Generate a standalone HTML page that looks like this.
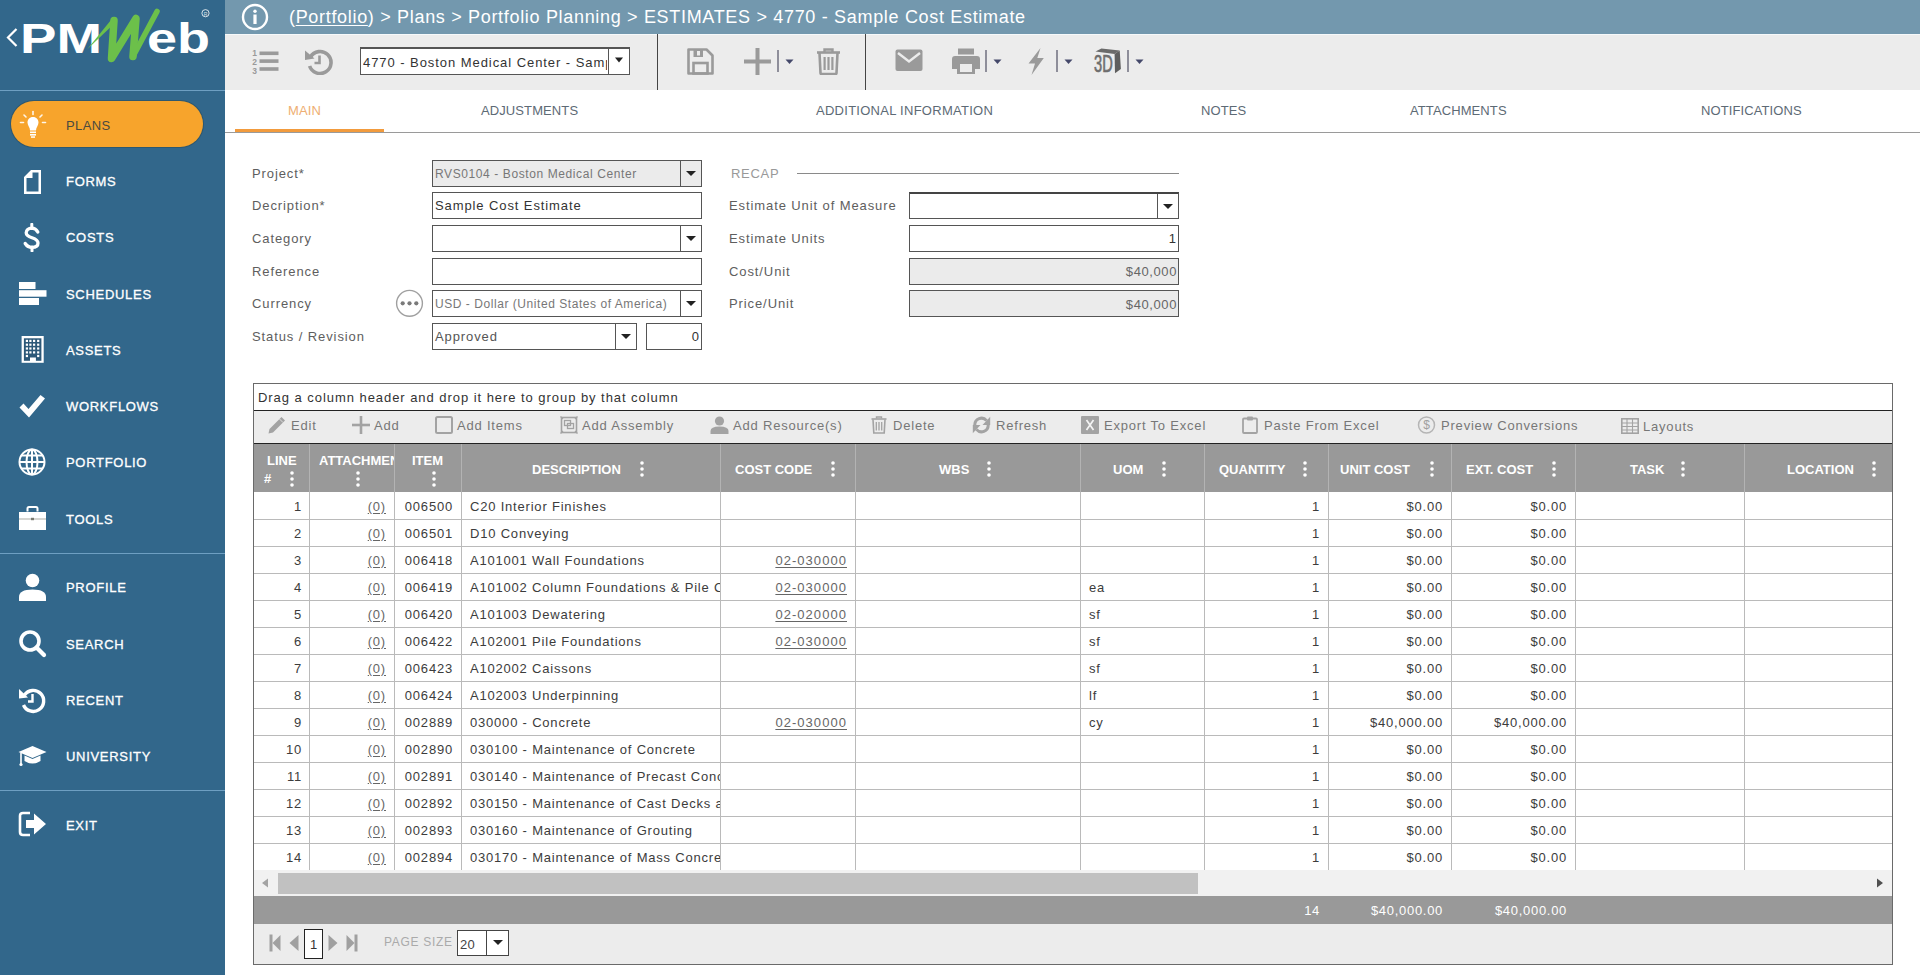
<!DOCTYPE html>
<html><head><meta charset="utf-8">
<style>
*{box-sizing:border-box;margin:0;padding:0}
html,body{width:1920px;height:975px;overflow:hidden;background:#fff;font-family:"Liberation Sans",sans-serif}
.a{position:absolute}
#side{left:0;top:0;width:225px;height:975px;background:#32678b}
.sl{left:0;width:225px;height:1px;background:#6e9fc2}
.ni{left:66px;font-size:13px;font-weight:400;-webkit-text-stroke:0.3px currentColor;color:#fff;letter-spacing:0.7px;line-height:15px;white-space:nowrap}
.ic{left:18px;width:30px;height:30px}
#top{left:225px;top:0;width:1695px;height:34px;background:#7398ae}
#tb{left:225px;top:34px;width:1695px;height:56px;background:#ececec}
.tab{top:103px;font-size:13px;color:#5d6a75;letter-spacing:0.1px;line-height:15px;white-space:nowrap}
.lbl{font-size:13px;color:#5e5e5e;letter-spacing:0.9px;line-height:15px;white-space:nowrap}
.inp{background:#fff;border:1px solid #555;height:27px}
.dd i{position:absolute;top:0;width:1px;height:25px;background:#555}
.dd b{position:absolute;top:10px;width:0;height:0;border-left:5px solid transparent;border-right:5px solid transparent;border-top:5px solid #222}
.gt{font-size:13px;color:#333;letter-spacing:0.95px;line-height:15px;white-space:nowrap}
.gh{font-size:13px;font-weight:700;color:#fff;line-height:15px;white-space:nowrap}
.gc{font-size:13px;color:#3c3c3c;letter-spacing:0.8px;line-height:15px;white-space:nowrap}
.r{text-align:right}
.lk{color:#666}
.lk u{text-underline-offset:2px}
.gf{font-size:13px;color:#fff;letter-spacing:0.7px;line-height:15px;white-space:nowrap}
.gb{font-size:13px;color:#777;letter-spacing:0.8px;line-height:15px;white-space:nowrap}
.txt{font-size:13px;letter-spacing:0.9px;color:#333;line-height:15px;white-space:nowrap}
</style></head><body>
<div id="side" class="a">
 <!-- logo -->
 <svg class="a" style="left:0;top:0" width="225" height="90" viewBox="0 0 225 90">
  <path d="M16.5 29 L8 37.5 L16.5 46" fill="none" stroke="#fff" stroke-width="2.2"/>
  <text x="20" y="52.7" font-family="Liberation Sans" font-weight="700" font-size="42" fill="#fff" textLength="82" lengthAdjust="spacingAndGlyphs">PM</text>
  <text x="147" y="52.7" font-family="Liberation Sans" font-weight="700" font-size="42" fill="#fff" textLength="63" lengthAdjust="spacingAndGlyphs">eb</text>
  <path d="M87 49.5 L111 20 L116.5 21.5 Z" fill="#6cc04a"/>
  <path d="M114 20.5 L111.5 58.5 L136 18.5 L133 56.5" fill="none" stroke="#6cc04a" stroke-width="7.5" stroke-linecap="round" stroke-linejoin="round"/>
  <path d="M133 56.5 L157 11.5" fill="none" stroke="#6cc04a" stroke-width="5.5" stroke-linecap="round"/>
  <circle cx="205.5" cy="13.2" r="3.6" fill="none" stroke="#fff" stroke-width="1" opacity="0.8"/>
  <text x="205.5" y="15.5" font-family="Liberation Sans" font-size="5" fill="#fff" text-anchor="middle" opacity="0.8">R</text>
 </svg>
 <div class="a sl" style="top:90px"></div>
 <!-- plans pill -->
 <div class="a" style="left:11px;top:101px;width:192px;height:46px;border-radius:23px;background:#f7a42c;box-shadow:0 0 0 1px rgba(40,60,60,0.35)"></div>
 <svg class="a" style="left:19px;top:110px" width="28" height="29" viewBox="0 0 28 29">
  <g stroke="#fff" stroke-width="1.6" stroke-linecap="round" opacity="0.9">
   <line x1="14" y1="1.5" x2="14" y2="4.5"/><line x1="5" y1="5" x2="7" y2="7"/><line x1="23" y1="5" x2="21" y2="7"/>
   <line x1="1.5" y1="12.5" x2="4.5" y2="12.5"/><line x1="23.5" y1="12.5" x2="26.5" y2="12.5"/>
  </g>
  <path d="M14 7 C10.5 7 8.5 9.6 8.5 12.6 C8.5 15.6 11 17.5 11 20.5 L17 20.5 C17 17.5 19.5 15.6 19.5 12.6 C19.5 9.6 17.5 7 14 7Z" fill="#fff"/>
  <rect x="11" y="21.5" width="6" height="1.6" fill="#fff"/><rect x="11" y="24" width="6" height="1.6" fill="#fff"/><rect x="12" y="26.3" width="4" height="1.5" fill="#fff"/>
 </svg>
 <div class="a ni" style="top:118px;color:#4a4a40;-webkit-text-stroke:0;letter-spacing:0.4px">PLANS</div>
 <!-- forms -->
 <svg class="a" style="left:22px;top:168px" width="21" height="28" viewBox="0 0 21 28">
  <path d="M2 9 L9 2 L19 2 L19 26 L2 26 Z M4.5 10 L4.5 23.5 L16.5 23.5 L16.5 4.5 L10.5 4.5 L10.5 10 Z" fill="#fff" fill-rule="evenodd"/>
 </svg>
 <div class="a ni" style="top:174px">FORMS</div>
 <!-- costs -->
 <svg class="a" style="left:20px;top:223px" width="24" height="29" viewBox="0 0 24 29">
  <path d="M17.8 9 C16.5 6.5 14.5 5.2 11.8 5.2 C8.3 5.2 6.2 7.2 6.2 9.8 C6.2 12.8 9 13.8 12 14.8 C15 15.8 18 16.8 18 20 C18 22.6 15.8 24.4 12 24.4 C9 24.4 6.8 23 5.2 20.5" fill="none" stroke="#fff" stroke-width="3.3" stroke-linecap="round"/>
  <path d="M11.8 1.2 V5.5 M12 24 V28" stroke="#fff" stroke-width="3" stroke-linecap="round"/>
 </svg>
 <div class="a ni" style="top:230px">COSTS</div>
 <!-- schedules -->
 <svg class="a" style="left:18px;top:281px" width="30" height="25" viewBox="0 0 30 25">
  <rect x="1" y="1" width="16.5" height="7" fill="#fff"/><rect x="1" y="9.2" width="27.5" height="6.5" fill="#fff"/><rect x="1" y="17" width="20" height="7" fill="#fff"/>
 </svg>
 <div class="a ni" style="top:287px">SCHEDULES</div>
 <!-- assets -->
 <svg class="a" style="left:21px;top:335px" width="24" height="29" viewBox="0 0 24 29">
  <rect x="0.6" y="1" width="22.1" height="26.8" fill="#fff"/>
  <rect x="2.9" y="3.3" width="17.5" height="22.5" fill="#2c5878"/>
  <rect x="4.8" y="4.8" width="2.2" height="2.2" fill="#fff"/><rect x="4.8" y="8.6" width="2.2" height="2.2" fill="#fff"/><rect x="4.8" y="12.4" width="2.2" height="2.2" fill="#fff"/><rect x="4.8" y="16.3" width="2.2" height="2.2" fill="#fff"/><rect x="8.3" y="4.8" width="2.2" height="2.2" fill="#fff"/><rect x="8.3" y="8.6" width="2.2" height="2.2" fill="#fff"/><rect x="8.3" y="12.4" width="2.2" height="2.2" fill="#fff"/><rect x="8.3" y="16.3" width="2.2" height="2.2" fill="#fff"/><rect x="12.0" y="4.8" width="2.2" height="2.2" fill="#fff"/><rect x="12.0" y="8.6" width="2.2" height="2.2" fill="#fff"/><rect x="12.0" y="12.4" width="2.2" height="2.2" fill="#fff"/><rect x="12.0" y="16.3" width="2.2" height="2.2" fill="#fff"/><rect x="16.1" y="4.8" width="2.2" height="2.2" fill="#fff"/><rect x="16.1" y="8.6" width="2.2" height="2.2" fill="#fff"/><rect x="16.1" y="12.4" width="2.2" height="2.2" fill="#fff"/><rect x="16.1" y="16.3" width="2.2" height="2.2" fill="#fff"/><rect x="4.8" y="19.9" width="2.2" height="2.2" fill="#fff"/><rect x="16.1" y="19.9" width="2.2" height="2.2" fill="#fff"/>
  <rect x="9" y="22.5" width="5.9" height="4" fill="#fff"/>
 </svg>
 <div class="a ni" style="top:343px">ASSETS</div>
 <!-- workflows -->
 <svg class="a" style="left:18px;top:393px" width="28" height="26" viewBox="0 0 28 26">
  <path d="M1.5 14.5 L5.5 10.5 L10.5 16 L22.5 2 L27 5.5 L11 24.5 Z" fill="#fff"/>
 </svg>
 <div class="a ni" style="top:399px">WORKFLOWS</div>
 <!-- portfolio -->
 <svg class="a" style="left:18px;top:448px" width="28" height="28" viewBox="0 0 28 28">
  <g fill="none" stroke="#fff" stroke-width="2">
   <circle cx="14" cy="14" r="12.5"/>
   <ellipse cx="14" cy="14" rx="5.5" ry="12.5"/>
   <line x1="14" y1="1.5" x2="14" y2="26.5"/>
   <line x1="1.5" y1="14" x2="26.5" y2="14"/>
   <path d="M3.5 7.5 H24.5 M3.5 20.5 H24.5"/>
  </g>
 </svg>
 <div class="a ni" style="top:455px">PORTFOLIO</div>
 <!-- tools -->
 <svg class="a" style="left:18px;top:506px" width="29" height="25" viewBox="0 0 29 25">
  <path d="M9.5 5.5 V2.5 Q9.5 1 11 1 H18 Q19.5 1 19.5 2.5 V5.5" fill="none" stroke="#fff" stroke-width="2"/>
  <rect x="1" y="6" width="27" height="18" fill="#fff"/>
  <rect x="1" y="12.6" width="27" height="0.8" fill="#9a9a90"/><rect x="13" y="11.8" width="3" height="2.4" fill="#7a7a70"/>
 </svg>
 <div class="a ni" style="top:512px">TOOLS</div>
 <div class="a sl" style="top:553px"></div>
 <!-- profile -->
 <svg class="a" style="left:18px;top:573px" width="29" height="29" viewBox="0 0 29 29">
  <circle cx="14.5" cy="7.5" r="6.8" fill="#fff"/>
  <path d="M1 28 V24 Q1 16.5 14.5 16.5 Q28 16.5 28 24 V28 Z" fill="#fff"/>
 </svg>
 <div class="a ni" style="top:580px">PROFILE</div>
 <!-- search -->
 <svg class="a" style="left:18px;top:629px" width="29" height="29" viewBox="0 0 29 29">
  <circle cx="12" cy="12" r="9" fill="none" stroke="#fff" stroke-width="3.6"/>
  <line x1="18.5" y1="18.5" x2="26" y2="26" stroke="#fff" stroke-width="4.2" stroke-linecap="round"/>
 </svg>
 <div class="a ni" style="top:637px">SEARCH</div>
 <!-- recent -->
 <svg class="a" style="left:18px;top:686px" width="29" height="29" viewBox="0 0 29 29">
  <path d="M6.5 9 A10.5 10.5 0 1 1 5.5 19" fill="none" stroke="#fff" stroke-width="3.4"/>
  <path d="M1 3 L10 11.5 L1 12.5 Z" fill="#fff"/>
  <path d="M14.5 8 V15.5 H10" fill="none" stroke="#fff" stroke-width="2.4"/>
 </svg>
 <div class="a ni" style="top:693px">RECENT</div>
 <!-- university -->
 <svg class="a" style="left:18px;top:745px" width="29" height="22" viewBox="0 0 29 22">
  <path d="M14.5 1 L28.5 7 L14.5 13 L0.5 7 Z" fill="#fff"/>
  <path d="M6.5 10.5 V16 Q14.5 21 22.5 16 V10.5 L14.5 14 Z" fill="#fff"/>
  <line x1="3" y1="8" x2="3" y2="19" stroke="#fff" stroke-width="1.6"/>
  <circle cx="3" cy="19.5" r="1.6" fill="#fff"/>
 </svg>
 <div class="a ni" style="top:749px">UNIVERSITY</div>
 <div class="a sl" style="top:790px"></div>
 <!-- exit -->
 <svg class="a" style="left:18px;top:810px" width="30" height="28" viewBox="0 0 30 28">
  <path d="M12 3 H5 Q2 3 2 6 V22 Q2 25 5 25 H12" fill="none" stroke="#fff" stroke-width="2.6"/>
  <path d="M8 10 H16 V3.5 L28 14 L16 24.5 V18 H8 Z" fill="#fff"/>
 </svg>
 <div class="a ni" style="top:818px">EXIT</div>
</div>

<div id="top" class="a">
 <svg class="a" style="left:16px;top:3px" width="28" height="28" viewBox="0 0 28 28">
  <circle cx="14" cy="14" r="12" fill="none" stroke="#fff" stroke-width="2.4"/>
  <circle cx="14" cy="8.3" r="1.7" fill="#fff"/>
  <rect x="12.4" y="11.5" width="3.2" height="9.5" fill="#fff"/>
 </svg>
 <div class="a" style="left:64px;top:7px;font-size:18px;line-height:20px;color:#fff;letter-spacing:0.68px;white-space:nowrap">(<span style="text-decoration:underline;text-underline-offset:2px">Portfolio</span>) &gt; Plans &gt; Portfolio Planning &gt; ESTIMATES &gt; 4770 - Sample Cost Estimate</div>
</div>
<div id="tb" class="a">
 <div class="a" style="left:0;top:0;width:1695px;height:1px;background:#f6f9fa"></div>
 <!-- list icon -->
 <svg class="a" style="left:26px;top:14px" width="28" height="27" viewBox="0 0 28 27">
  <g fill="#9a9a9a">
   <text x="3.5" y="8" font-family="Liberation Sans" font-weight="700" font-size="8.5" text-anchor="middle">1</text>
   <text x="3.5" y="17" font-family="Liberation Sans" font-weight="700" font-size="8.5" text-anchor="middle">2</text>
   <text x="3.5" y="26" font-family="Liberation Sans" font-weight="700" font-size="8.5" text-anchor="middle">3</text>
   <rect x="8.5" y="3.5" width="19" height="3.6"/><rect x="8.5" y="11.3" width="19" height="3.6"/><rect x="8.5" y="19.2" width="19" height="3.6"/>
  </g>
 </svg>
 <!-- history icon -->
 <svg class="a" style="left:80px;top:14px" width="28" height="27" viewBox="0 0 28 27">
  <path d="M5.5 9 A11 11 0 1 1 4.6 18" fill="none" stroke="#9a9a9a" stroke-width="3.6"/>
  <path d="M0 2.5 L9.5 10.5 L0 12 Z" fill="#9a9a9a"/>
  <path d="M14.5 7.5 V15 H9.5" fill="none" stroke="#9a9a9a" stroke-width="2.6"/>
 </svg>
 <!-- record dropdown -->
 <div class="a" style="left:135px;top:13px;width:270px;height:28px;background:#fff;border:1px solid #555;border-top:2px solid #555"></div>
 <div class="a" style="left:383px;top:15px;width:1px;height:25px;background:#555"></div>
 <svg class="a" style="left:389px;top:23px" width="10" height="6" viewBox="0 0 10 6"><path d="M1 0.5 H9 L5 5.5 Z" fill="#222"/></svg>
 <div class="a txt" style="left:138px;top:21px;color:#333;letter-spacing:0.94px;width:244px;overflow:hidden">4770 - Boston Medical Center - Sample Cost Estimate</div>
 <div class="a" style="left:432px;top:0;width:1px;height:56px;background:#444"></div>
 <!-- save -->
 <svg class="a" style="left:462px;top:14px" width="27" height="27" viewBox="0 0 27 27">
  <path d="M1.5 1.5 H19.5 L25.5 7.5 V25.5 H1.5 Z" fill="none" stroke="#9a9a9a" stroke-width="2.6" stroke-linejoin="round"/>
  <rect x="6.5" y="1.5" width="9.5" height="7.5" fill="#9a9a9a"/>
  <rect x="10" y="3" width="3" height="4.5" fill="#ececec"/>
  <rect x="6.5" y="15" width="14" height="10.5" fill="none" stroke="#9a9a9a" stroke-width="2.6"/>
 </svg>
 <!-- plus -->
 <svg class="a" style="left:519px;top:14px" width="27" height="27" viewBox="0 0 27 27">
  <rect x="0" y="11.5" width="27" height="4" fill="#9a9a9a"/><rect x="11.5" y="0" width="4" height="27" fill="#9a9a9a"/>
 </svg>
 <div class="a" style="left:552px;top:16px;width:2px;height:22px;background:#8e8e9a"></div>
 <svg class="a" style="left:560px;top:25px" width="9" height="6" viewBox="0 0 9 6"><path d="M0.5 0.5 H8.5 L4.5 5 Z" fill="#44486a"/></svg>
 <!-- trash -->
 <svg class="a" style="left:591px;top:14px" width="25" height="27" viewBox="0 0 25 27">
  <path d="M1 4.5 H24" stroke="#9a9a9a" stroke-width="2.6"/>
  <path d="M8.5 4 V1.5 H16.5 V4" fill="none" stroke="#9a9a9a" stroke-width="2.4"/>
  <path d="M3.5 5 L4.5 25 Q4.5 26 5.5 26 H19.5 Q20.5 26 20.5 25 L21.5 5" fill="none" stroke="#9a9a9a" stroke-width="2.6"/>
  <rect x="7.5" y="9" width="2.2" height="13" fill="#9a9a9a"/><rect x="11.4" y="9" width="2.2" height="13" fill="#9a9a9a"/><rect x="15.3" y="9" width="2.2" height="13" fill="#9a9a9a"/>
 </svg>
 <div class="a" style="left:640px;top:0;width:1px;height:56px;background:#444"></div>
 <!-- mail -->
 <svg class="a" style="left:670px;top:15px" width="28" height="23" viewBox="0 0 28 23">
  <rect x="0.5" y="0.5" width="27" height="21.5" rx="2" fill="#9a9a9a"/>
  <path d="M3 4 L14 12.5 L25 4" fill="none" stroke="#ececec" stroke-width="2.4"/>
 </svg>
 <!-- print -->
 <svg class="a" style="left:727px;top:14px" width="28" height="27" viewBox="0 0 28 27">
  <rect x="6" y="0.5" width="16" height="6" fill="#9a9a9a"/>
  <path d="M0 11 Q0 8 3 8 H25 Q28 8 28 11 V21 H23 V26 H5 V21 H0 Z" fill="#9a9a9a"/>
  <rect x="8" y="16" width="12" height="8" fill="#ececec"/>
 </svg>
 <div class="a" style="left:760px;top:16px;width:2px;height:22px;background:#8e8e9a"></div>
 <svg class="a" style="left:768px;top:25px" width="9" height="6" viewBox="0 0 9 6"><path d="M0.5 0.5 H8.5 L4.5 5 Z" fill="#44486a"/></svg>
 <!-- bolt -->
 <svg class="a" style="left:803px;top:14px" width="16" height="27" viewBox="0 0 16 27">
  <path d="M12.5 0 L0.5 15.5 H7 L3.5 27 L15.8 10 H9.3 Z" fill="#9a9a9a"/>
 </svg>
 <div class="a" style="left:831px;top:16px;width:2px;height:22px;background:#8e8e9a"></div>
 <svg class="a" style="left:839px;top:25px" width="9" height="6" viewBox="0 0 9 6"><path d="M0.5 0.5 H8.5 L4.5 5 Z" fill="#44486a"/></svg>
 <!-- 3D -->
 <svg class="a" style="left:867px;top:13px" width="30" height="30" viewBox="0 0 30 30">
  <path d="M3.5 4.4 L9.4 1.4 L27.7 3.4 L22.6 7.1 Z" fill="#6a6a6a"/>
  <path d="M22.6 7.1 L27.7 3.4 L28.9 21.9 L23 26.2 Z" fill="#5e5e5e"/>
  <text x="2" y="25.4" font-family="Liberation Sans" font-size="23.5" fill="#6e6e6e" stroke="#6e6e6e" stroke-width="0.7" textLength="18.7" lengthAdjust="spacingAndGlyphs">3D</text>
 </svg>
 <div class="a" style="left:902px;top:16px;width:2px;height:22px;background:#8e8e9a"></div>
 <svg class="a" style="left:910px;top:25px" width="9" height="6" viewBox="0 0 9 6"><path d="M0.5 0.5 H8.5 L4.5 5 Z" fill="#44486a"/></svg>
</div>
<!-- tabs -->
<div class="a" style="left:225px;top:132px;width:1695px;height:1px;background:#9a9a9a"></div>
<div class="a" style="left:235px;top:129px;width:149px;height:3px;background:#f29b3d"></div>
<div class="a tab" style="left:288px;color:#eeae72">MAIN</div>
<div class="a tab" style="left:481px">ADJUSTMENTS</div>
<div class="a tab" style="left:816px;letter-spacing:0.27px">ADDITIONAL INFORMATION</div>
<div class="a tab" style="left:1201px">NOTES</div>
<div class="a tab" style="left:1410px">ATTACHMENTS</div>
<div class="a tab" style="left:1701px">NOTIFICATIONS</div>

<!-- form -->
<div class="a lbl" style="left:252px;top:166px">Project*</div>
<div class="a lbl" style="left:252px;top:198px">Decription*</div>
<div class="a lbl" style="left:252px;top:231px">Category</div>
<div class="a lbl" style="left:252px;top:264px">Reference</div>
<div class="a lbl" style="left:252px;top:296px">Currency</div>
<div class="a lbl" style="left:252px;top:329px">Status / Revision</div>

<div class="a inp dd" style="left:432px;top:160px;width:270px;background:#ebebeb"><i style="left:247px"></i><b style="left:253px"></b></div>
<div class="a txt" style="left:435px;top:167px;font-size:12px;color:#777;letter-spacing:0.6px">RVS0104 - Boston Medical Center</div>
<div class="a inp" style="left:432px;top:192px;width:270px"></div>
<div class="a txt" style="left:435px;top:198px">Sample Cost Estimate</div>
<div class="a inp dd" style="left:432px;top:225px;width:270px"><i style="left:247px"></i><b style="left:253px"></b></div>
<div class="a inp" style="left:432px;top:258px;width:270px"></div>
<div class="a inp dd" style="left:432px;top:290px;width:270px"><i style="left:247px"></i><b style="left:253px"></b></div>
<div class="a txt" style="left:435px;top:297px;font-size:12px;color:#777;letter-spacing:0.55px">USD - Dollar (United States of America)</div>
<svg class="a" style="left:395px;top:289px" width="30" height="30" viewBox="0 0 30 30">
 <circle cx="14.5" cy="14.3" r="12.9" fill="#fff" stroke="#a0a0a0" stroke-width="1.4"/>
 <circle cx="7.7" cy="14.3" r="2.1" fill="#7a7a7a"/><circle cx="14.5" cy="14.3" r="2.1" fill="#7a7a7a"/><circle cx="21.3" cy="14.3" r="2.1" fill="#7a7a7a"/>
</svg>
<div class="a inp dd" style="left:432px;top:323px;width:205px"><i style="left:182px"></i><b style="left:188px"></b></div>
<div class="a txt" style="left:435px;top:329px;color:#555">Approved</div>
<div class="a inp" style="left:646px;top:323px;width:56px"></div>
<div class="a txt" style="left:646px;top:329px;width:53px;text-align:right;letter-spacing:0">0</div>

<div class="a lbl" style="left:731px;top:166px;color:#999;letter-spacing:0.7px">RECAP</div>
<div class="a" style="left:797px;top:173px;width:382px;height:1px;background:#8a8a8a"></div>
<div class="a lbl" style="left:729px;top:198px">Estimate Unit of Measure</div>
<div class="a lbl" style="left:729px;top:231px">Estimate Units</div>
<div class="a lbl" style="left:729px;top:264px">Cost/Unit</div>
<div class="a lbl" style="left:729px;top:296px">Price/Unit</div>
<div class="a inp dd" style="left:909px;top:192px;width:270px;border-top:2px solid #444"><i style="left:247px"></i><b style="left:253px"></b></div>
<div class="a inp" style="left:909px;top:225px;width:270px"></div>
<div class="a txt" style="left:909px;top:231px;width:267px;text-align:right;letter-spacing:0">1</div>
<div class="a inp" style="left:909px;top:258px;width:270px;background:#ebebeb"></div>
<div class="a txt" style="left:909px;top:264px;width:268px;text-align:right;color:#666;letter-spacing:0.6px">$40,000</div>
<div class="a inp" style="left:909px;top:290px;width:270px;background:#ebebeb"></div>
<div class="a txt" style="left:909px;top:297px;width:268px;text-align:right;color:#666;letter-spacing:0.6px">$40,000</div>

<!--GRID-->
<div class="a" style="left:253px;top:383px;width:1640px;height:582px;border:1px solid #6a6a6a;background:#fff"></div>
<div class="a gt" style="left:258px;top:390px">Drag a column header and drop it here to group by that column</div>
<div class="a" style="left:254px;top:410px;width:1638px;height:1px;background:#222"></div>
<div class="a" style="left:254px;top:411px;width:1638px;height:32px;background:#ececec"></div>
<div class="a" style="left:254px;top:443px;width:1638px;height:1px;background:#222"></div>
<div class="a" style="left:254px;top:444px;width:1638px;height:48px;background:#999"></div>
<div class="a" style="left:309px;top:444px;width:1px;height:426px;background:#bababa"></div>
<div class="a" style="left:394px;top:444px;width:1px;height:426px;background:#bababa"></div>
<div class="a" style="left:461px;top:444px;width:1px;height:426px;background:#bababa"></div>
<div class="a" style="left:720px;top:444px;width:1px;height:426px;background:#bababa"></div>
<div class="a" style="left:855px;top:444px;width:1px;height:426px;background:#bababa"></div>
<div class="a" style="left:1080px;top:444px;width:1px;height:426px;background:#bababa"></div>
<div class="a" style="left:1204px;top:444px;width:1px;height:426px;background:#bababa"></div>
<div class="a" style="left:1328px;top:444px;width:1px;height:426px;background:#bababa"></div>
<div class="a" style="left:1451px;top:444px;width:1px;height:426px;background:#bababa"></div>
<div class="a" style="left:1575px;top:444px;width:1px;height:426px;background:#bababa"></div>
<div class="a" style="left:1744px;top:444px;width:1px;height:426px;background:#bababa"></div>
<div class="a" style="left:309px;top:444px;width:1px;height:48px;background:#b3b3b3"></div>
<div class="a" style="left:394px;top:444px;width:1px;height:48px;background:#b3b3b3"></div>
<div class="a" style="left:461px;top:444px;width:1px;height:48px;background:#b3b3b3"></div>
<div class="a" style="left:720px;top:444px;width:1px;height:48px;background:#b3b3b3"></div>
<div class="a" style="left:855px;top:444px;width:1px;height:48px;background:#b3b3b3"></div>
<div class="a" style="left:1080px;top:444px;width:1px;height:48px;background:#b3b3b3"></div>
<div class="a" style="left:1204px;top:444px;width:1px;height:48px;background:#b3b3b3"></div>
<div class="a" style="left:1328px;top:444px;width:1px;height:48px;background:#b3b3b3"></div>
<div class="a" style="left:1451px;top:444px;width:1px;height:48px;background:#b3b3b3"></div>
<div class="a" style="left:1575px;top:444px;width:1px;height:48px;background:#b3b3b3"></div>
<div class="a" style="left:1744px;top:444px;width:1px;height:48px;background:#b3b3b3"></div>
<div class="a gh" style="left:267px;top:453px">LINE</div>
<div class="a gh" style="left:264px;top:471px">#</div>
<svg class="a" style="left:290px;top:471px" width="4" height="16" viewBox="0 0 4 16"><circle cx="2" cy="2" r="1.8" fill="#fff"/><circle cx="2" cy="8" r="1.8" fill="#fff"/><circle cx="2" cy="14" r="1.8" fill="#fff"/></svg>
<div class="a gh" style="left:319px;top:453px;width:75px;overflow:hidden">ATTACHMENTS</div>
<svg class="a" style="left:356px;top:471px" width="4" height="16" viewBox="0 0 4 16"><circle cx="2" cy="2" r="1.8" fill="#fff"/><circle cx="2" cy="8" r="1.8" fill="#fff"/><circle cx="2" cy="14" r="1.8" fill="#fff"/></svg>
<div class="a gh" style="left:412px;top:453px">ITEM</div>
<svg class="a" style="left:432px;top:471px" width="4" height="16" viewBox="0 0 4 16"><circle cx="2" cy="2" r="1.8" fill="#fff"/><circle cx="2" cy="8" r="1.8" fill="#fff"/><circle cx="2" cy="14" r="1.8" fill="#fff"/></svg>
<div class="a gh" style="left:532px;top:462px">DESCRIPTION</div>
<svg class="a" style="left:640px;top:461px" width="4" height="16" viewBox="0 0 4 16"><circle cx="2" cy="2" r="1.8" fill="#fff"/><circle cx="2" cy="8" r="1.8" fill="#fff"/><circle cx="2" cy="14" r="1.8" fill="#fff"/></svg>
<div class="a gh" style="left:735px;top:462px">COST CODE</div>
<svg class="a" style="left:831px;top:461px" width="4" height="16" viewBox="0 0 4 16"><circle cx="2" cy="2" r="1.8" fill="#fff"/><circle cx="2" cy="8" r="1.8" fill="#fff"/><circle cx="2" cy="14" r="1.8" fill="#fff"/></svg>
<div class="a gh" style="left:939px;top:462px">WBS</div>
<svg class="a" style="left:987px;top:461px" width="4" height="16" viewBox="0 0 4 16"><circle cx="2" cy="2" r="1.8" fill="#fff"/><circle cx="2" cy="8" r="1.8" fill="#fff"/><circle cx="2" cy="14" r="1.8" fill="#fff"/></svg>
<div class="a gh" style="left:1113px;top:462px">UOM</div>
<svg class="a" style="left:1162px;top:461px" width="4" height="16" viewBox="0 0 4 16"><circle cx="2" cy="2" r="1.8" fill="#fff"/><circle cx="2" cy="8" r="1.8" fill="#fff"/><circle cx="2" cy="14" r="1.8" fill="#fff"/></svg>
<div class="a gh" style="left:1219px;top:462px">QUANTITY</div>
<svg class="a" style="left:1303px;top:461px" width="4" height="16" viewBox="0 0 4 16"><circle cx="2" cy="2" r="1.8" fill="#fff"/><circle cx="2" cy="8" r="1.8" fill="#fff"/><circle cx="2" cy="14" r="1.8" fill="#fff"/></svg>
<div class="a gh" style="left:1340px;top:462px">UNIT COST</div>
<svg class="a" style="left:1430px;top:461px" width="4" height="16" viewBox="0 0 4 16"><circle cx="2" cy="2" r="1.8" fill="#fff"/><circle cx="2" cy="8" r="1.8" fill="#fff"/><circle cx="2" cy="14" r="1.8" fill="#fff"/></svg>
<div class="a gh" style="left:1466px;top:462px">EXT. COST</div>
<svg class="a" style="left:1552px;top:461px" width="4" height="16" viewBox="0 0 4 16"><circle cx="2" cy="2" r="1.8" fill="#fff"/><circle cx="2" cy="8" r="1.8" fill="#fff"/><circle cx="2" cy="14" r="1.8" fill="#fff"/></svg>
<div class="a gh" style="left:1630px;top:462px">TASK</div>
<svg class="a" style="left:1681px;top:461px" width="4" height="16" viewBox="0 0 4 16"><circle cx="2" cy="2" r="1.8" fill="#fff"/><circle cx="2" cy="8" r="1.8" fill="#fff"/><circle cx="2" cy="14" r="1.8" fill="#fff"/></svg>
<div class="a gh" style="left:1787px;top:462px">LOCATION</div>
<svg class="a" style="left:1872px;top:461px" width="4" height="16" viewBox="0 0 4 16"><circle cx="2" cy="2" r="1.8" fill="#fff"/><circle cx="2" cy="8" r="1.8" fill="#fff"/><circle cx="2" cy="14" r="1.8" fill="#fff"/></svg>
<div class="a" style="left:254px;top:519px;width:1638px;height:1px;background:#bababa"></div>
<div class="a gc r" style="left:253px;width:49px;top:499px">1</div>
<div class="a gc r lk" style="left:309px;width:77px;top:499px"><u>(0)</u></div>
<div class="a gc r" style="left:394px;width:59px;top:499px">006500</div>
<div class="a gc" style="left:470px;width:250px;top:499px;overflow:hidden">C20 Interior Finishes</div>
<div class="a gc r" style="left:1204px;width:116px;top:499px">1</div>
<div class="a gc r" style="left:1328px;width:115px;top:499px">$0.00</div>
<div class="a gc r" style="left:1451px;width:116px;top:499px">$0.00</div>
<div class="a" style="left:254px;top:546px;width:1638px;height:1px;background:#bababa"></div>
<div class="a gc r" style="left:253px;width:49px;top:526px">2</div>
<div class="a gc r lk" style="left:309px;width:77px;top:526px"><u>(0)</u></div>
<div class="a gc r" style="left:394px;width:59px;top:526px">006501</div>
<div class="a gc" style="left:470px;width:250px;top:526px;overflow:hidden">D10 Conveying</div>
<div class="a gc r" style="left:1204px;width:116px;top:526px">1</div>
<div class="a gc r" style="left:1328px;width:115px;top:526px">$0.00</div>
<div class="a gc r" style="left:1451px;width:116px;top:526px">$0.00</div>
<div class="a" style="left:254px;top:573px;width:1638px;height:1px;background:#bababa"></div>
<div class="a gc r" style="left:253px;width:49px;top:553px">3</div>
<div class="a gc r lk" style="left:309px;width:77px;top:553px"><u>(0)</u></div>
<div class="a gc r" style="left:394px;width:59px;top:553px">006418</div>
<div class="a gc" style="left:470px;width:250px;top:553px;overflow:hidden">A101001 Wall Foundations</div>
<div class="a gc r lk" style="left:720px;width:127px;top:553px;letter-spacing:1.05px"><u>02-030000</u></div>
<div class="a gc r" style="left:1204px;width:116px;top:553px">1</div>
<div class="a gc r" style="left:1328px;width:115px;top:553px">$0.00</div>
<div class="a gc r" style="left:1451px;width:116px;top:553px">$0.00</div>
<div class="a" style="left:254px;top:600px;width:1638px;height:1px;background:#bababa"></div>
<div class="a gc r" style="left:253px;width:49px;top:580px">4</div>
<div class="a gc r lk" style="left:309px;width:77px;top:580px"><u>(0)</u></div>
<div class="a gc r" style="left:394px;width:59px;top:580px">006419</div>
<div class="a gc" style="left:470px;width:250px;top:580px;overflow:hidden">A101002 Column Foundations &amp; Pile Caps</div>
<div class="a gc r lk" style="left:720px;width:127px;top:580px;letter-spacing:1.05px"><u>02-030000</u></div>
<div class="a gc" style="left:1089px;top:580px">ea</div>
<div class="a gc r" style="left:1204px;width:116px;top:580px">1</div>
<div class="a gc r" style="left:1328px;width:115px;top:580px">$0.00</div>
<div class="a gc r" style="left:1451px;width:116px;top:580px">$0.00</div>
<div class="a" style="left:254px;top:627px;width:1638px;height:1px;background:#bababa"></div>
<div class="a gc r" style="left:253px;width:49px;top:607px">5</div>
<div class="a gc r lk" style="left:309px;width:77px;top:607px"><u>(0)</u></div>
<div class="a gc r" style="left:394px;width:59px;top:607px">006420</div>
<div class="a gc" style="left:470px;width:250px;top:607px;overflow:hidden">A101003 Dewatering</div>
<div class="a gc r lk" style="left:720px;width:127px;top:607px;letter-spacing:1.05px"><u>02-020000</u></div>
<div class="a gc" style="left:1089px;top:607px">sf</div>
<div class="a gc r" style="left:1204px;width:116px;top:607px">1</div>
<div class="a gc r" style="left:1328px;width:115px;top:607px">$0.00</div>
<div class="a gc r" style="left:1451px;width:116px;top:607px">$0.00</div>
<div class="a" style="left:254px;top:654px;width:1638px;height:1px;background:#bababa"></div>
<div class="a gc r" style="left:253px;width:49px;top:634px">6</div>
<div class="a gc r lk" style="left:309px;width:77px;top:634px"><u>(0)</u></div>
<div class="a gc r" style="left:394px;width:59px;top:634px">006422</div>
<div class="a gc" style="left:470px;width:250px;top:634px;overflow:hidden">A102001 Pile Foundations</div>
<div class="a gc r lk" style="left:720px;width:127px;top:634px;letter-spacing:1.05px"><u>02-030000</u></div>
<div class="a gc" style="left:1089px;top:634px">sf</div>
<div class="a gc r" style="left:1204px;width:116px;top:634px">1</div>
<div class="a gc r" style="left:1328px;width:115px;top:634px">$0.00</div>
<div class="a gc r" style="left:1451px;width:116px;top:634px">$0.00</div>
<div class="a" style="left:254px;top:681px;width:1638px;height:1px;background:#bababa"></div>
<div class="a gc r" style="left:253px;width:49px;top:661px">7</div>
<div class="a gc r lk" style="left:309px;width:77px;top:661px"><u>(0)</u></div>
<div class="a gc r" style="left:394px;width:59px;top:661px">006423</div>
<div class="a gc" style="left:470px;width:250px;top:661px;overflow:hidden">A102002 Caissons</div>
<div class="a gc" style="left:1089px;top:661px">sf</div>
<div class="a gc r" style="left:1204px;width:116px;top:661px">1</div>
<div class="a gc r" style="left:1328px;width:115px;top:661px">$0.00</div>
<div class="a gc r" style="left:1451px;width:116px;top:661px">$0.00</div>
<div class="a" style="left:254px;top:708px;width:1638px;height:1px;background:#bababa"></div>
<div class="a gc r" style="left:253px;width:49px;top:688px">8</div>
<div class="a gc r lk" style="left:309px;width:77px;top:688px"><u>(0)</u></div>
<div class="a gc r" style="left:394px;width:59px;top:688px">006424</div>
<div class="a gc" style="left:470px;width:250px;top:688px;overflow:hidden">A102003 Underpinning</div>
<div class="a gc" style="left:1089px;top:688px">lf</div>
<div class="a gc r" style="left:1204px;width:116px;top:688px">1</div>
<div class="a gc r" style="left:1328px;width:115px;top:688px">$0.00</div>
<div class="a gc r" style="left:1451px;width:116px;top:688px">$0.00</div>
<div class="a" style="left:254px;top:735px;width:1638px;height:1px;background:#bababa"></div>
<div class="a gc r" style="left:253px;width:49px;top:715px">9</div>
<div class="a gc r lk" style="left:309px;width:77px;top:715px"><u>(0)</u></div>
<div class="a gc r" style="left:394px;width:59px;top:715px">002889</div>
<div class="a gc" style="left:470px;width:250px;top:715px;overflow:hidden">030000 - Concrete</div>
<div class="a gc r lk" style="left:720px;width:127px;top:715px;letter-spacing:1.05px"><u>02-030000</u></div>
<div class="a gc" style="left:1089px;top:715px">cy</div>
<div class="a gc r" style="left:1204px;width:116px;top:715px">1</div>
<div class="a gc r" style="left:1328px;width:115px;top:715px">$40,000.00</div>
<div class="a gc r" style="left:1451px;width:116px;top:715px">$40,000.00</div>
<div class="a" style="left:254px;top:762px;width:1638px;height:1px;background:#bababa"></div>
<div class="a gc r" style="left:253px;width:49px;top:742px">10</div>
<div class="a gc r lk" style="left:309px;width:77px;top:742px"><u>(0)</u></div>
<div class="a gc r" style="left:394px;width:59px;top:742px">002890</div>
<div class="a gc" style="left:470px;width:250px;top:742px;overflow:hidden">030100 - Maintenance of Concrete</div>
<div class="a gc r" style="left:1204px;width:116px;top:742px">1</div>
<div class="a gc r" style="left:1328px;width:115px;top:742px">$0.00</div>
<div class="a gc r" style="left:1451px;width:116px;top:742px">$0.00</div>
<div class="a" style="left:254px;top:789px;width:1638px;height:1px;background:#bababa"></div>
<div class="a gc r" style="left:253px;width:49px;top:769px">11</div>
<div class="a gc r lk" style="left:309px;width:77px;top:769px"><u>(0)</u></div>
<div class="a gc r" style="left:394px;width:59px;top:769px">002891</div>
<div class="a gc" style="left:470px;width:250px;top:769px;overflow:hidden">030140 - Maintenance of Precast Concrete</div>
<div class="a gc r" style="left:1204px;width:116px;top:769px">1</div>
<div class="a gc r" style="left:1328px;width:115px;top:769px">$0.00</div>
<div class="a gc r" style="left:1451px;width:116px;top:769px">$0.00</div>
<div class="a" style="left:254px;top:816px;width:1638px;height:1px;background:#bababa"></div>
<div class="a gc r" style="left:253px;width:49px;top:796px">12</div>
<div class="a gc r lk" style="left:309px;width:77px;top:796px"><u>(0)</u></div>
<div class="a gc r" style="left:394px;width:59px;top:796px">002892</div>
<div class="a gc" style="left:470px;width:250px;top:796px;overflow:hidden">030150 - Maintenance of Cast Decks and Toppings</div>
<div class="a gc r" style="left:1204px;width:116px;top:796px">1</div>
<div class="a gc r" style="left:1328px;width:115px;top:796px">$0.00</div>
<div class="a gc r" style="left:1451px;width:116px;top:796px">$0.00</div>
<div class="a" style="left:254px;top:843px;width:1638px;height:1px;background:#bababa"></div>
<div class="a gc r" style="left:253px;width:49px;top:823px">13</div>
<div class="a gc r lk" style="left:309px;width:77px;top:823px"><u>(0)</u></div>
<div class="a gc r" style="left:394px;width:59px;top:823px">002893</div>
<div class="a gc" style="left:470px;width:250px;top:823px;overflow:hidden">030160 - Maintenance of Grouting</div>
<div class="a gc r" style="left:1204px;width:116px;top:823px">1</div>
<div class="a gc r" style="left:1328px;width:115px;top:823px">$0.00</div>
<div class="a gc r" style="left:1451px;width:116px;top:823px">$0.00</div>
<div class="a" style="left:254px;top:870px;width:1638px;height:1px;background:#bababa"></div>
<div class="a gc r" style="left:253px;width:49px;top:850px">14</div>
<div class="a gc r lk" style="left:309px;width:77px;top:850px"><u>(0)</u></div>
<div class="a gc r" style="left:394px;width:59px;top:850px">002894</div>
<div class="a gc" style="left:470px;width:250px;top:850px;overflow:hidden">030170 - Maintenance of Mass Concrete</div>
<div class="a gc r" style="left:1204px;width:116px;top:850px">1</div>
<div class="a gc r" style="left:1328px;width:115px;top:850px">$0.00</div>
<div class="a gc r" style="left:1451px;width:116px;top:850px">$0.00</div>
<div class="a" style="left:254px;top:870px;width:1638px;height:26px;background:#f1f1f1"></div>
<div class="a" style="left:278px;top:873px;width:920px;height:21px;background:#c1c1c1"></div>
<svg class="a" style="left:261px;top:878px" width="8" height="10" viewBox="0 0 8 10"><path d="M7 0.5 V9.5 L1 5 Z" fill="#a3a3a3"/></svg>
<svg class="a" style="left:1876px;top:878px" width="8" height="10" viewBox="0 0 8 10"><path d="M1 0.5 V9.5 L7 5 Z" fill="#505050"/></svg>
<div class="a" style="left:254px;top:896px;width:1638px;height:28px;background:#999"></div>
<div class="a gf r" style="left:1204px;width:116px;top:903px">14</div>
<div class="a gf r" style="left:1328px;width:115px;top:903px">$40,000.00</div>
<div class="a gf r" style="left:1451px;width:116px;top:903px">$40,000.00</div>
<div class="a" style="left:254px;top:924px;width:1638px;height:40px;background:#ececec"></div>
<svg class="a" style="left:269px;top:934px" width="12" height="18" viewBox="0 0 12 18"><rect x="0.5" y="0.5" width="3" height="17" fill="#a0a0a0"/><path d="M11.5 1 V17 L3.5 9 Z" fill="#a0a0a0"/></svg>
<svg class="a" style="left:289px;top:934px" width="10" height="18" viewBox="0 0 10 18"><path d="M9.5 1 V17 L0.5 9 Z" fill="#a0a0a0"/></svg>
<div class="a" style="left:304px;top:929px;width:19px;height:30px;border:1.3px solid #222;background:#fff"></div>
<div class="a gc" style="left:304px;width:19px;text-align:center;top:937px;letter-spacing:0;color:#333">1</div>
<svg class="a" style="left:328px;top:934px" width="10" height="18" viewBox="0 0 10 18"><path d="M0.5 1 V17 L9.5 9 Z" fill="#a0a0a0"/></svg>
<svg class="a" style="left:346px;top:934px" width="12" height="18" viewBox="0 0 12 18"><path d="M0.5 1 V17 L8.5 9 Z" fill="#a0a0a0"/><rect x="8.5" y="0.5" width="3" height="17" fill="#a0a0a0"/></svg>
<div class="a" style="left:384px;top:935px;font-size:12px;line-height:14px;color:#aaa;letter-spacing:0.7px;white-space:nowrap">PAGE SIZE</div>
<div class="a dd" style="left:457px;top:930px;width:52px;height:26px;border:1px solid #444;background:#fff"><i style="left:28px;height:24px;background:#444"></i><b style="left:35px;top:9px"></b></div>
<div class="a gc" style="left:460px;top:937px;letter-spacing:0.3px;color:#444">20</div>
<svg class="a" style="left:267px;top:416px" width="19" height="18" viewBox="0 0 19 18"><path d="M14.5 1 L18 4.5 L6 16.5 L1.5 17.5 L2.5 13 Z" fill="#a3a3a3"/><path d="M12.5 3 L16 6.5" stroke="#ececec" stroke-width="0.8"/></svg>
<div class="a gb" style="left:291px;top:418px;">Edit</div>
<svg class="a" style="left:352px;top:416px" width="18" height="18" viewBox="0 0 18 18"><rect x="0" y="7.7" width="18" height="2.6" fill="#a3a3a3"/><rect x="7.7" y="0" width="2.6" height="18" fill="#a3a3a3"/></svg>
<div class="a gb" style="left:374px;top:418px;">Add</div>
<svg class="a" style="left:435px;top:416px" width="18" height="18" viewBox="0 0 18 18"><rect x="1" y="1" width="16" height="16" rx="1.5" fill="none" stroke="#a3a3a3" stroke-width="2"/></svg>
<div class="a gb" style="left:457px;top:418px;">Add Items</div>
<svg class="a" style="left:560px;top:416px" width="18" height="18" viewBox="0 0 18 18"><rect x="1.5" y="1.5" width="15" height="15" fill="none" stroke="#a3a3a3" stroke-width="1.6"/><rect x="4.5" y="4.5" width="6" height="5" fill="none" stroke="#a3a3a3" stroke-width="1.3"/><rect x="7.5" y="7.5" width="6" height="5" fill="none" stroke="#a3a3a3" stroke-width="1.3"/><path d="M0.5 0.5 L3 3 M17.5 0.5 L15 3 M0.5 17.5 L3 15 M17.5 17.5 L15 15" stroke="#a3a3a3" stroke-width="1.2"/></svg>
<div class="a gb" style="left:582px;top:418px;">Add Assembly</div>
<svg class="a" style="left:710px;top:416px" width="19" height="18" viewBox="0 0 19 18"><circle cx="9.5" cy="5" r="4.6" fill="#a3a3a3"/><path d="M0.5 18 V15 Q0.5 10.5 9.5 10.5 Q18.5 10.5 18.5 15 V18 Z" fill="#a3a3a3"/></svg>
<div class="a gb" style="left:733px;top:418px;">Add Resource(s)</div>
<svg class="a" style="left:871px;top:416px" width="16" height="18" viewBox="0 0 16 18"><path d="M0.5 3 H15.5" stroke="#a3a3a3" stroke-width="1.6"/><path d="M5.5 2.5 V1 H10.5 V2.5" fill="none" stroke="#a3a3a3" stroke-width="1.4"/><path d="M2 3.5 L2.8 17 H13.2 L14 3.5" fill="none" stroke="#a3a3a3" stroke-width="1.6"/><path d="M5.3 6 V14.5 M8 6 V14.5 M10.7 6 V14.5" stroke="#a3a3a3" stroke-width="1.3"/></svg>
<div class="a gb" style="left:893px;top:418px;">Delete</div>
<svg class="a" style="left:972px;top:416px" width="19" height="18" viewBox="0 0 19 18"><path d="M2.8 9.2 A6.7 6.7 0 0 1 14.6 4.6" fill="none" stroke="#a3a3a3" stroke-width="3"/><path d="M18.2 0.8 V9 H10.5 Z" fill="#a3a3a3"/><path d="M16.2 8.8 A6.7 6.7 0 0 1 4.4 13.4" fill="none" stroke="#a3a3a3" stroke-width="3"/><path d="M0.8 17.2 V9 H8.5 Z" fill="#a3a3a3"/></svg>
<div class="a gb" style="left:996px;top:418px;">Refresh</div>
<svg class="a" style="left:1081px;top:416px" width="18" height="18" viewBox="0 0 18 18"><rect x="0" y="0" width="18" height="18" rx="1" fill="#a3a3a3"/><path d="M5.5 4 L12.5 14 M12.5 4 L5.5 14" stroke="#f4f4f4" stroke-width="1.7"/></svg>
<div class="a gb" style="left:1104px;top:418px;">Export To Excel</div>
<svg class="a" style="left:1242px;top:416px" width="16" height="18" viewBox="0 0 16 18"><rect x="1" y="2.5" width="14" height="14.5" rx="1" fill="none" stroke="#a3a3a3" stroke-width="1.8"/><rect x="5" y="0.5" width="6" height="4" rx="1" fill="#a3a3a3"/></svg>
<div class="a gb" style="left:1264px;top:418px;">Paste From Excel</div>
<svg class="a" style="left:1417px;top:416px" width="19" height="18" viewBox="0 0 19 18"><circle cx="9.5" cy="9" r="8" fill="none" stroke="#b5b5b5" stroke-width="1.5"/><text x="9.5" y="13.3" font-family="Liberation Sans" font-size="12" fill="#a0a0a0" text-anchor="middle">$</text></svg>
<div class="a gb" style="left:1441px;top:418px;">Preview Conversions</div>
<svg class="a" style="left:1621px;top:418px" width="18" height="16" viewBox="0 0 18 16"><rect x="0.8" y="0.8" width="16.4" height="14.4" fill="none" stroke="#a3a3a3" stroke-width="1.6"/><path d="M0.8 5 H17.2 M0.8 8.5 H17.2 M0.8 12 H17.2 M6 0.8 V15.2 M11.5 0.8 V15.2" stroke="#a3a3a3" stroke-width="1.1"/></svg>
<div class="a gb" style="left:1643px;top:418px;top:419px">Layouts</div>
<!--/GRID-->
</body></html>
